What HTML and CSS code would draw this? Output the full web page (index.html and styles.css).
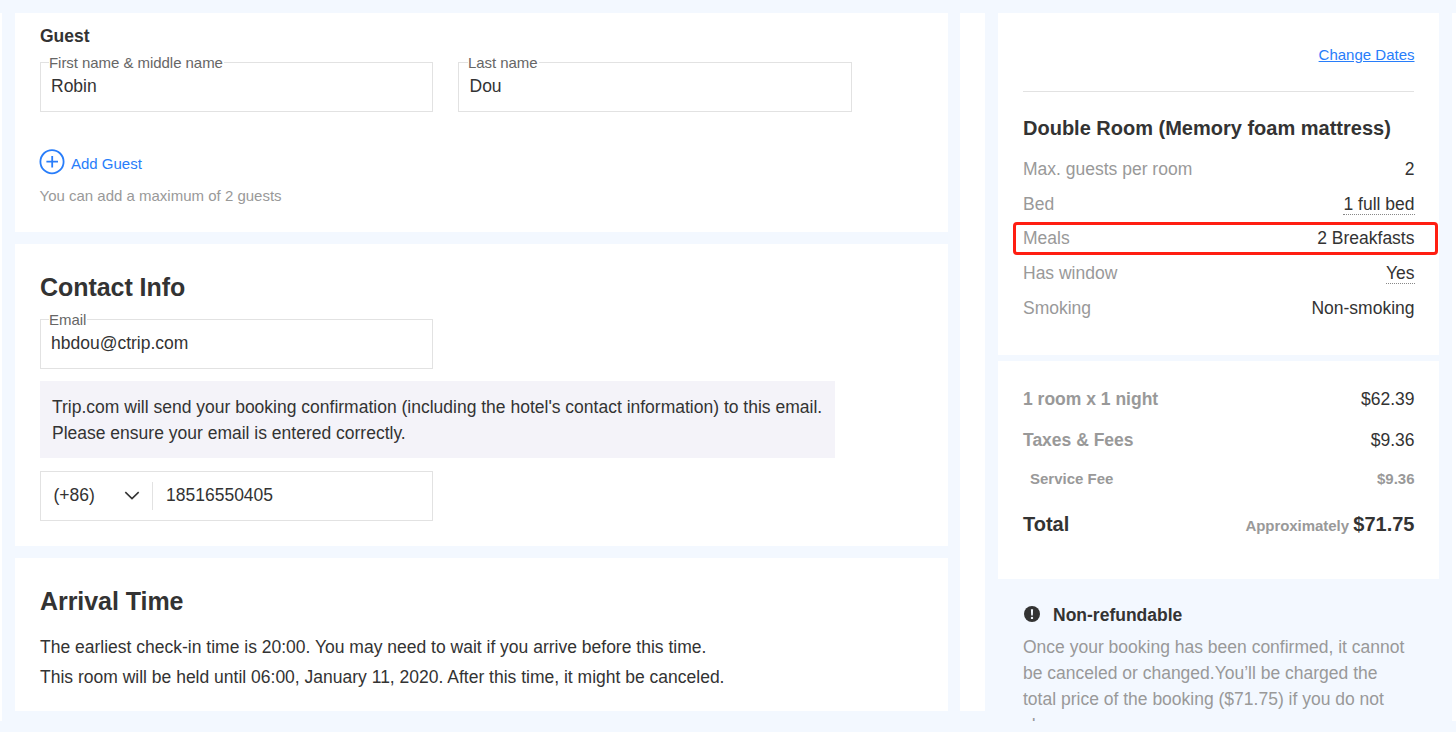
FILE: index.html
```html
<!DOCTYPE html>
<html lang="en">
<head>
<meta charset="utf-8">
<title>Booking</title>
<link rel="stylesheet" href="styles.css">
</head>
<body>
<div class="page">
  <div class="edge edge-left"></div>
  <main class="form">
    <section class="card guest">
      <h3 class="subtitle">Guest</h3>
      <div class="fields">
        <div class="field"><span class="label">First name &amp; middle name</span><span class="value">Robin</span></div>
        <div class="field field-last"><span class="label">Last name</span><span class="value">Dou</span></div>
      </div>
      <div class="add">
        <svg class="plus" width="26" height="26" viewBox="0 0 26 26" fill="none" stroke="#287dfa" stroke-width="1.8"><circle cx="13" cy="12.7" r="11.6"/><path d="M7.4 12.7h11.6M13.2 6.9v11.6"/></svg>
        <span class="add-text">Add Guest</span>
      </div>
      <p class="hint">You can add a maximum of 2 guests</p>
    </section>
    <section class="card contact">
      <h2 class="title">Contact Info</h2>
      <div class="field"><span class="label">Email</span><span class="value">hbdou@ctrip.com</span></div>
      <p class="notice">Trip.com will send your booking confirmation (including the hotel's contact information) to this email.<br>Please ensure your email is entered correctly.</p>
      <div class="phone">
        <div class="code"><span class="digits">(+86)</span><svg width="16" height="10" viewBox="0 0 16 10" fill="none" stroke="#333" stroke-width="1.6"><path d="M1.3 1.1L8 7.6L14.7 1.1"/></svg></div>
        <span class="number digits">18516550405</span>
      </div>
    </section>
    <section class="card arrival">
      <h2 class="title">Arrival Time</h2>
      <p class="arrival-text">The earliest check-in time is 20:00. You may need to wait if you arrive before this time.<br>This room will be held until 06:00, January 11, 2020. After this time, it might be canceled.</p>
    </section>
  </main>
  <div class="divider-strip"></div>
  <aside class="side">
    <section class="card room">
      <div class="dates"><a class="link">Change Dates</a></div>
      <h3 class="room-title">Double Room (Memory foam mattress)</h3>
      <div class="row"><span class="key">Max. guests per room</span><span>2</span></div>
      <div class="row row-bed"><span class="key">Bed</span><span class="dotted">1 full bed</span></div>
      <div class="row row-meals"><span class="key">Meals</span><span>2 Breakfasts</span><i class="highlight"></i></div>
      <div class="row"><span class="key">Has window</span><span class="dotted">Yes</span></div>
      <div class="row"><span class="key">Smoking</span><span>Non-smoking</span></div>
    </section>
    <section class="card price">
      <div class="row"><b class="key">1 room x 1 night</b><span>$62.39</span></div>
      <div class="row row-tax"><b class="key">Taxes &amp; Fees</b><span>$9.36</span></div>
      <div class="row row-fee"><span>Service Fee</span><span>$9.36</span></div>
      <div class="row row-total"><span>Total</span><span><small class="approx">Approximately</small> $71.75</span></div>
    </section>
    <section class="policy">
      <div class="policy-head">
        <svg class="alert" width="16" height="16" viewBox="0 0 16 16"><circle cx="8" cy="8" r="8" fill="#333"/><path d="M6.9 3.2h2.2l-.3 6.2H7.2z" fill="#f3f8ff"/><circle cx="8" cy="11.9" r="1.2" fill="#f3f8ff"/></svg>
        <span>Non-refundable</span>
      </div>
      <p class="policy-text">Once your booking has been confirmed, it cannot be canceled or changed.You’ll be charged the total price of the booking ($71.75) if you do not show up.</p>
    </section>
  </aside>
  <div class="edge edge-right"></div>
</div>
</body>
</html>
```

FILE: styles.css
```css
* { box-sizing: border-box; }
body {
  margin: 0;
  background: #f3f8ff;
  color: #333;
  font: 17.5px/26px "Liberation Sans", Arial, sans-serif;
}
h2, h3, p { margin: 0; }
svg { display: block; flex: none; }
.page { display: flex; height: 732px; padding-top: 13px; overflow: hidden; }
.edge { flex: none; height: 708px; background: #fff; }
.edge-left { width: 2px; }
.edge-right { width: 4px; margin-left: 13px; }
.form { display: flex; flex-direction: column; gap: 12px; width: 933px; margin-left: 13px; }
.card { background: #fff; padding: 0 25px; }
.guest { height: 219px; padding-top: 13px; }
.contact { height: 302px; padding-top: 27px; }
.arrival { height: 153px; padding-top: 27px; }
.divider-strip { width: 25px; height: 698px; margin-left: 12px; background: #fff; }

.subtitle { font-size: 17.5px; line-height: 21px; }
.title { font-size: 25px; line-height: 32px; letter-spacing: -0.05px; }
.fields { display: flex; gap: 25px; margin-top: 15px; }
.field { position: relative; width: 393px; height: 50px; border: 1px solid #e2e2e2; padding: 10px; }
.field-last { width: 394px; }
.field-last .value { padding-left: 0.5px; }
.label { position: absolute; top: -9px; left: 8px; padding-right: 1px; background: #fff; color: #666; font-size: 15px; line-height: 18px; letter-spacing: -0.05px; }
.field-last .label { left: 9px; }
.value { display: block; line-height: 26px; }
.add { display: flex; gap: 6px; margin: 37px 0 0 -1px; color: #287dfa; font-size: 15px; line-height: 30px; height: 30px; }
.hint { margin: 8px 0 0 -0.5px; color: #999; font-size: 15px; line-height: 18px; }

.contact .field { margin-top: 16px; }
.notice { width: 795px; height: 77px; margin-top: 12px; padding: 13px 0 0 12px; background: #f4f3f9; white-space: nowrap; }
.phone { display: flex; align-items: center; width: 393px; height: 50px; margin-top: 13px; border: 1px solid #e2e2e2; }
.code { display: flex; align-items: center; justify-content: space-between; width: 112px; height: 28px; padding: 0 12px 0 12.5px; border-right: 1px solid #e2e2e2; }
.digits { padding-bottom: 2px; line-height: 26px; }
.number { margin-left: 13px; }
.arrival-text { margin-top: 15px; line-height: 30px; white-space: nowrap; }

.side { width: 441px; margin-left: 13px; height: 708px; overflow: hidden; }
.room { height: 342px; }
.dates { height: 79px; padding-top: 33px; border-bottom: 1px solid #e2e2e2; text-align: right; font-size: 15px; line-height: 18px; }
.link { color: #287dfa; text-decoration: underline; margin-right: -0.5px; }
.room-title { margin: 23px 0 15px; font-size: 20px; line-height: 26px; white-space: nowrap; }
.row { position: relative; display: flex; justify-content: space-between; height: 35px; margin-right: -0.5px; line-height: 26px; white-space: nowrap; }
.row-bed { height: 34px; }
.key { color: #999; }
.dotted { height: 24px; border-bottom: 1px dotted #888; }
.highlight { position: absolute; left: -10px; top: -3px; width: 425px; height: 33px; border: 3px solid #ff1e12; border-radius: 4px; }
.price { height: 218px; margin-top: 6px; padding-top: 25px; }
.price .row { height: 41px; }
.price .row-fee { height: 41px; padding-left: 7px; color: #999; font-size: 15px; font-weight: bold; line-height: 22px; }
.price .row-total { font-size: 20px; font-weight: bold; line-height: 30px; }
.approx { color: #999; font-size: 15px; letter-spacing: -0.05px; margin-right: -1.2px; }
.policy { padding: 23px 25px 0; }
.policy-head { display: flex; align-items: center; gap: 13px; padding-left: 1px; font-weight: bold; }
.alert { margin-bottom: 2px; }
.policy-text { width: 391px; margin-top: 6px; color: #999; }
```
